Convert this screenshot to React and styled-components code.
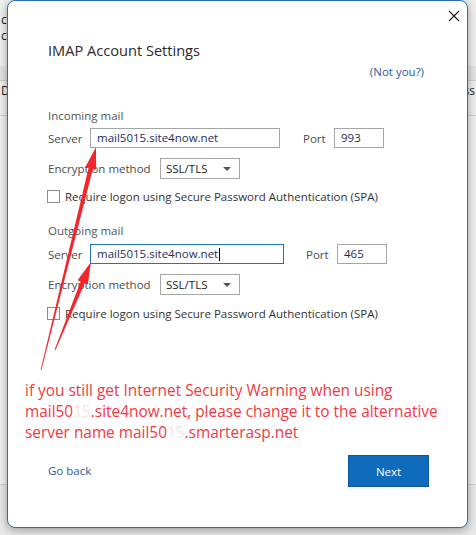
import React from "react";
import styled, { createGlobalStyle } from "styled-components";

const GlobalStyle = createGlobalStyle`
  html, body { margin: 0; padding: 0; }
  body {
    background: #eeeeee;
    font-family: "Segoe UI", "Open Sans", "Noto Sans", sans-serif;
  }
`;

const Desktop = styled.div`
  position: relative;
  width: 476px;
  height: 535px;
  overflow: hidden;
  background: #f0f0f0;
`;

/* ---------- background application (mostly hidden) ---------- */
const BackApp = styled.div`
  display: flex;
  flex-direction: column;
  width: 100%;
  height: 100%;
  font-family: "Segoe UI", "Open Sans", sans-serif;
  font-size: 12px;
  color: #222;
`;

const BackLine = styled.div`
  height: ${(p) => p.$h}px;
  line-height: ${(p) => p.$h}px;
  padding: 0 1px;
  display: flex;
  justify-content: space-between;
  background: ${(p) => p.$bg || "transparent"};
  border-bottom: ${(p) => (p.$rule ? "1px solid #cfcfcf" : "none")};
  white-space: nowrap;
`;

const Spacer = styled.div`
  flex: 1;
`;

/* ---------- dialog ---------- */
const Dialog = styled.div`
  position: absolute;
  left: 7px;
  top: 0;
  width: 461px;
  height: 528px;
  box-sizing: border-box;
  background: #ffffff;
  border: 1px solid #2a6db5;
  border-radius: 8px;
  box-shadow: 0 2px 10px rgba(0, 0, 0, 0.35);
  display: flex;
  flex-direction: column;
  font-family: "Segoe UI", "Open Sans", "Noto Sans", sans-serif;
`;

const CloseRow = styled.div`
  height: 30px;
  display: flex;
  justify-content: flex-end;
  align-items: flex-start;
  padding: 9px 7px 0 0;
  box-sizing: border-box;
`;

const CloseButton = styled.button`
  width: 12px;
  height: 12px;
  padding: 0;
  border: none;
  background: none;
  display: flex;
`;

const Form = styled.div`
  display: flex;
  flex-direction: column;
  padding-left: 40px;
`;

const Title = styled.h1`
  margin: 9px 0 0 0;
  font-size: 14.6px;
  line-height: 20px;
  font-weight: 400;
  color: #2b2b2b;
`;

const NotYouRow = styled.div`
  display: flex;
  justify-content: flex-end;
  margin: 4px 43px 0 0;
`;

const Link = styled.a`
  font-size: 11.5px;
  line-height: 16px;
  color: #2d5d9c;
  text-decoration: none;
  cursor: pointer;
`;

const SectionLabel = styled.div`
  margin-top: ${(p) => p.$top}px;
  font-size: 11.5px;
  line-height: 16px;
  color: #555555;
`;

const FieldRow = styled.div`
  display: flex;
  align-items: center;
  margin-top: ${(p) => p.$top}px;
  height: ${(p) => p.$h || 20}px;
`;

const FieldLabel = styled.label`
  font-size: 11.5px;
  color: #4c4c4c;
  width: ${(p) => p.$w}px;
  margin-left: ${(p) => p.$ml || 0}px;
  flex: none;
`;

const TextBox = styled.div`
  box-sizing: border-box;
  width: ${(p) => p.$w}px;
  height: 20px;
  border: 1px solid ${(p) => (p.$focus ? "#1e74c4" : "#a6a6a6")};
  padding: 0 0 0 6px;
  font-size: 11.5px;
  line-height: 18px;
  color: #1d2f5c;
  display: flex;
  align-items: center;
  flex: none;
`;

const Caret = styled.span`
  display: inline-block;
  width: 1px;
  height: 13px;
  background: #000;
  margin-left: 1px;
`;

const Select = styled.div`
  box-sizing: border-box;
  width: 80px;
  height: 21px;
  border: 1px solid #a6a6a6;
  padding: 0 8px 0 5px;
  font-size: 11.5px;
  color: #222;
  display: flex;
  align-items: center;
  justify-content: space-between;
  flex: none;
`;

const Arrow = styled.span`
  width: 0;
  height: 0;
  border-left: 4px solid transparent;
  border-right: 4px solid transparent;
  border-top: 4px solid #555;
`;

const CheckRow = styled.label`
  display: flex;
  align-items: center;
  margin-top: ${(p) => p.$top}px;
  height: 16px;
  font-size: 11.5px;
  color: #333;
`;

const CheckBox = styled.span`
  box-sizing: border-box;
  width: 13px;
  height: 13px;
  border: 1px solid #8a8a8a;
  background: #fff;
  margin: 0 5px 0 -1px;
  flex: none;
`;

const Note = styled.p`
  margin: 59px 0 0 0;
  padding-left: 17px;
  font-size: 15.4px;
  line-height: 21px;
  color: #f23a3f;
  white-space: nowrap;
`;

const Hidden = styled.span`
  color: #fde2e3;
`;

const Footer = styled.div`
  margin-top: 12px;
  padding: 0 38px 0 40px;
  display: flex;
  justify-content: space-between;
  align-items: center;
`;

const NextButton = styled.button`
  width: 81px;
  height: 32px;
  box-sizing: border-box;
  background: #0f6cbd;
  border: 1px solid #0b56a0;
  color: #ffffff;
  font-family: inherit;
  font-size: 11.5px;
  cursor: pointer;
`;

const Annotation = styled.svg`
  position: absolute;
  left: 0;
  top: 0;
  pointer-events: none;
`;

function arrowPoints(tip, tail, headLen, headHalf, shaftHalf, tailHalf) {
  const dx = tail[0] - tip[0];
  const dy = tail[1] - tip[1];
  const len = Math.hypot(dx, dy);
  const u = [dx / len, dy / len];
  const n = [u[1], -u[0]];
  const base = [tip[0] + u[0] * headLen, tip[1] + u[1] * headLen];
  const p = (c, w) => `${(c[0] + n[0] * w).toFixed(1)},${(c[1] + n[1] * w).toFixed(1)}`;
  return [
    `${tip[0]},${tip[1]}`,
    p(base, headHalf),
    p(base, shaftHalf),
    p(tail, tailHalf),
    p(tail, -tailHalf),
    p(base, -shaftHalf),
    p(base, -headHalf),
  ].join(" ");
}

function Row({ top, port, server, serverW, portGap, focus }) {
  return (
    <FieldRow $top={top}>
      <FieldLabel $w={42}>Server</FieldLabel>
      <TextBox $w={serverW} $focus={focus}>
        {server}
        {focus && <Caret />}
      </TextBox>
      <FieldLabel $w={31} $ml={portGap}>Port</FieldLabel>
      <TextBox $w={50}>{port}</TextBox>
    </FieldRow>
  );
}

function Encryption({ top }) {
  return (
    <FieldRow $top={top} $h={21}>
      <FieldLabel $w={112}>Encryption method</FieldLabel>
      <Select>
        SSL/TLS
        <Arrow />
      </Select>
    </FieldRow>
  );
}

export default function App() {
  return (
    <>
      <GlobalStyle />
      <Desktop>
        <BackApp>
          <BackLine $h={13} />
          <BackLine $h={14}>
            <span>cc</span>
          </BackLine>
          <BackLine $h={17}>
            <span>ca</span>
          </BackLine>
          <BackLine $h={22} />
          <BackLine $h={14} $bg="#e4e4e4" $rule />
          <BackLine $h={19}>
            <span>Da</span>
            <span>ss</span>
          </BackLine>
          <BackLine $h={15} $rule />
          <Spacer />
          <BackLine $h={12} $rule />
          <BackLine $h={50} $bg="#e9e9e9" />
        </BackApp>

        <Dialog>
          <CloseRow>
            <CloseButton aria-label="Close">
              <svg width="12" height="12" viewBox="0 0 12 12">
                <path d="M1 1 L11 11 M11 1 L1 11" stroke="#1f1f1f" strokeWidth="1.2" fill="none" />
              </svg>
            </CloseButton>
          </CloseRow>

          <Form>
            <Title>IMAP Account Settings</Title>
            <NotYouRow>
              <Link>(Not you?)</Link>
            </NotYouRow>

            <SectionLabel $top={28}>Incoming mail</SectionLabel>
            <Row top={4} server="mail5015.site4now.net" serverW={190} portGap={23} port="993" />
            <Encryption top={10} />
            <CheckRow $top={9}>
              <CheckBox />
              Require logon using Secure Password Authentication (SPA)
            </CheckRow>

            <SectionLabel $top={19}>Outgoing mail</SectionLabel>
            <Row top={5} server="mail5015.site4now.net" serverW={194} portGap={22} port="465" focus />
            <Encryption top={10} />
            <CheckRow $top={10}>
              <CheckBox />
              Require logon using Secure Password Authentication (SPA)
            </CheckRow>
          </Form>

          <Note>
            if you still get Internet Security Warning when using
            <br />
            mail50<Hidden>15</Hidden>.site4now.net, please change it to the alternative
            <br />
            server name mail50<Hidden>15</Hidden>.smarterasp.net
          </Note>

          <Footer>
            <Link>Go back</Link>
            <NextButton>Next</NextButton>
          </Footer>
        </Dialog>

        <Annotation width="476" height="535" viewBox="0 0 476 535">
          <polygon points={arrowPoints([96, 147], [41, 370], 22, 5.5, 2.2, 0.4)} fill="#f3262b" />
          <polygon points={arrowPoints([91, 262], [55, 350], 22, 5.5, 2.2, 0.4)} fill="#f3262b" />
        </Annotation>
      </Desktop>
    </>
  );
}
